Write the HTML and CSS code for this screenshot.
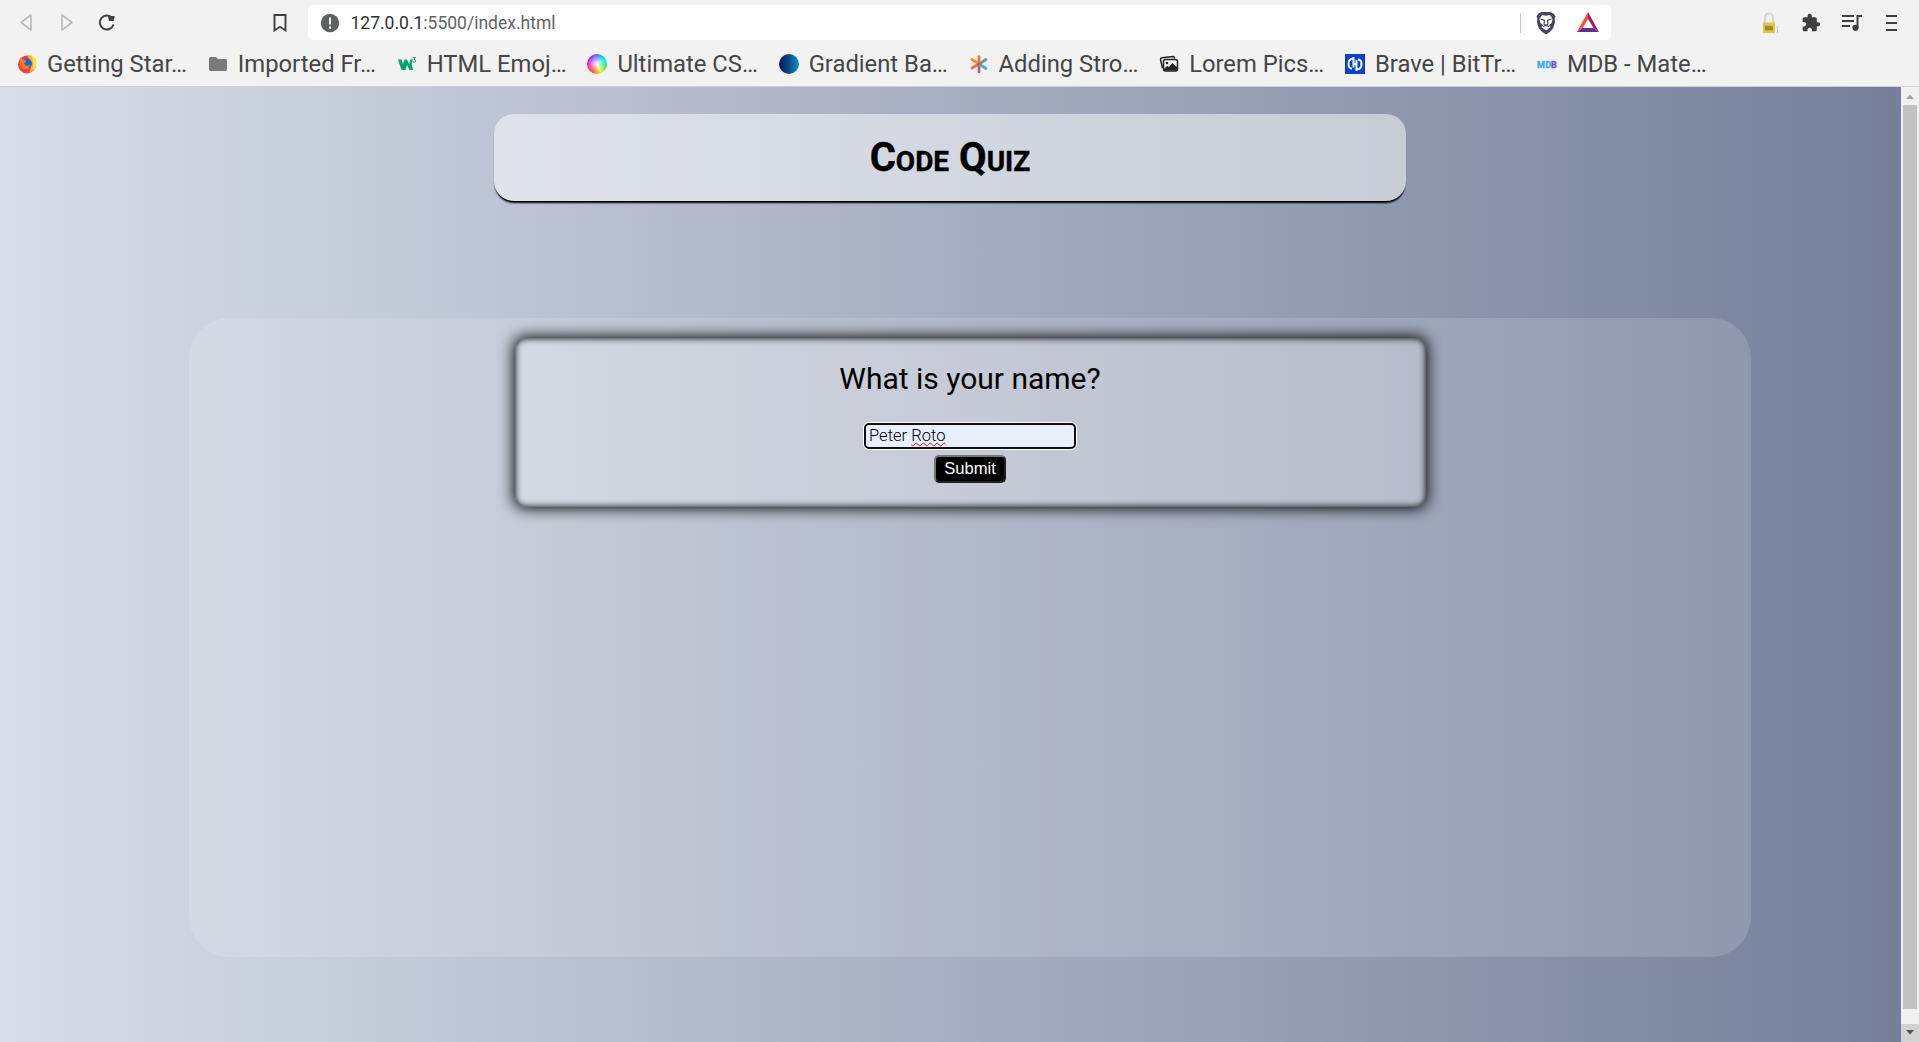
FILE: index.html
```
<!DOCTYPE html>
<html lang="en">
<head>
<meta charset="utf-8">
<title>Code Quiz</title>
<link rel="stylesheet" href="styles.css">
</head>
<body>
<div class="chrome">
  <div class="toolbar">
    <svg class="nav back" width="16" height="22" viewBox="0 0 16 22"><path d="M14 3v15L4 10.500z"/></svg>
    <svg class="nav forward" width="16" height="22" viewBox="0 0 16 22"><path d="M3 3v15L13 10.500z"/></svg>
    <svg class="reload" width="20" height="20" viewBox="0 0 20 20"><path class="line" d="M15.500 5.500A7 7 0 1 0 16.500 11.500"/><path d="M11 3h6.500v1.500l-1 3.500h-4.500z"/></svg>
    <svg class="bookmark" width="14" height="20" viewBox="0 0 14 20"><path d="M1.500 2h11v15.500L7 13.800 1.500 17.500z"/></svg>
    <div class="address">
      <svg class="info" width="20" height="20" viewBox="0 0 20 20"><circle cx="10" cy="10" r="9.200"/><path d="M10 4.500v7M10 13.500v2.200"/></svg>
      <span class="url"><b>127.0.0.1</b>:5500/index.html</span>
      <span class="divider"></span>
      <svg class="lion" width="22" height="24" viewBox="0 0 22 24"><path fill="#43475b" d="M6.500 1h9l3 1.500 2 3-.8 2 .3 4-2 6-3 3.200L11 23.500l-4-2.800-3-3.200-2-6 .3-4-.8-2 2-3z"/><path fill="#fff" d="M7 4l4 .7L15 4l2.500 4-.8 3.800-3 2.700 2 1.500L11 19.500 6.300 16l2-1.500-3-2.700L4.500 8z"/><path fill="none" stroke="#43475b" stroke-width="1.200" d="M5.500 8l4 1.500-.5 3.500 2 1.500 2-1.500-.5-3.500L16.500 8M8 15.500l3-1 3 1"/></svg>
      <svg class="bat" width="24" height="21" viewBox="0 0 24 21"><path fill="#ff4724" d="M12 0v7L6.500 16 1 20z"/><path fill="#9e1f63" d="M12 0v7l5.500 9 5.500 4z"/><path fill="#662d91" d="M1 20l5.500-4h11l5.500 4z"/></svg>
    </div>
    <div class="tools">
      <svg class="lock" width="18" height="22" viewBox="0 0 18 22"><path d="M4 11V6c0-6 8-6 8 0v5" fill="none" stroke="#d5d5d5" stroke-width="2.200"/><path d="M2 10.500h12v10.500H2z" fill="#e3c43a"/><path d="M4 13.500h2l1 1 2-1 2 1 1-.5v4l-2 .5-2-.5-2 .5H4z" fill="#9c8840"/><path d="M16.500 15v6M15.500 15h2" stroke="#c7c7c7"/></svg>
      <svg class="puzzle" width="20" height="20" viewBox="0 0 24 24"><path fill="#3f3f3f" d="M20.500 11H19V7c0-1.100-.9-2-2-2h-4V3.500C13 2.120 11.880 1 10.500 1S8 2.120 8 3.500V5H4c-1.100 0-2 .9-2 2v3.800h1.500c1.500 0 2.700 1.200 2.700 2.700s-1.200 2.700-2.700 2.700H2V20c0 1.100.9 2 2 2h3.800v-1.500c0-1.500 1.200-2.700 2.700-2.700s2.700 1.200 2.700 2.700V22H17c1.100 0 2-.9 2-2v-4h1.500c1.380 0 2.500-1.120 2.500-2.500S21.880 11 20.500 11z"/></svg>
      <svg class="music" width="20" height="18" viewBox="0 0 20 18"><path d="M0 2h12M0 7h12M0 12h8M15.500 14V2H20" fill="none" stroke="#3f3f3f" stroke-width="2"/><circle cx="13.500" cy="13.800" r="3.100" fill="#3f3f3f"/></svg>
      <svg class="menu" width="12" height="18" viewBox="0 0 12 18"><path d="M0 2h11M0 9h11M0 16h11" stroke="#3f3f3f" stroke-width="1.800"/></svg>
    </div>
  </div>
  <div class="bookmarks">
    <div class="item"><svg width="20" height="20" viewBox="0 0 20 20"><circle cx="10" cy="10.500" r="9" fill="#ff3b45"/><path d="M10 1c4 0 8 1 9 6 1 6-2 10-7 12 4-7 1-12-2-18z" fill="#ffb52e"/><path d="M14 1c5 3 6 8 4.500 12-1 2-2.500 3-3 3 2-5 1-10-1.500-15z" fill="#ffe83e"/><circle cx="10" cy="9.500" r="5" fill="#1667dc"/><path d="M3 3l3 3 4 .5-3 3 2 2.500 4-1-2 4-5 0-3-4z" fill="#ff7b24"/></svg><span>Getting Star…</span></div>
    <div class="item"><svg width="20" height="20" viewBox="0 0 20 20"><path d="M1 4.500q0-1.500 1.500-1.500H8l2 2h7.500Q19 5 19 6.500v9q0 1.500-1.500 1.500h-15Q1 17 1 15.500z" fill="#7a7a7a"/></svg><span>Imported Fr…</span></div>
    <div class="item"><svg width="20" height="20" viewBox="0 0 20 20"><path d="M1 5.500h3.500L6 10l1.500-4.500H10L12 10l1.500-4.500H16L14.500 10l1.500 6h-3.500L10 11l-1.500 5h-4z" fill="#04a56c"/><path d="M16 3.500h2.500L17 5.500q2 .3 1.500 2-1 1.200-2.500.5" fill="none" stroke="#04a56c"/></svg><span>HTML Emoj…</span></div>
    <div class="item"><i class="disc wheel"></i><span>Ultimate CS…</span></div>
    <div class="item"><i class="disc blue"></i><span>Gradient Ba…</span></div>
    <div class="item"><svg width="20" height="20" viewBox="0 0 20 20"><g fill="none" stroke-width="2.700" stroke-linecap="round"><path d="M10 10V2.500M10 10L3 14" stroke="#f76b3c"/><path d="M10 10L3 5.500" stroke="#ff8a24"/><path d="M10 10l7-4.500" stroke="#778da6"/><path d="M10 10v8" stroke="#b65c86"/><path d="M10 10l7 4.500" stroke="#38b8ba"/><path d="M9.500 10h1" stroke="#e34e63"/></g></svg><span>Adding Stro…</span></div>
    <div class="item"><svg width="20" height="20" viewBox="0 0 20 20"><path d="M3.500 14L1.500 5.500q0-1.500 1.500-1.800L14 2.500q1.500 0 1.500 2" fill="none" stroke="#222" stroke-width="1.500"/><rect x="4.500" y="5.500" width="14" height="11.500" rx="2" fill="#f2f2f2" stroke="#222" stroke-width="1.500"/><path d="M5 15l3-3 2 1 3.500-4 5 4.500v3H5z" fill="#222"/><circle cx="8" cy="9" r="1.200" fill="#222"/></svg><span>Lorem Pics…</span></div>
    <div class="item"><svg width="20" height="20" viewBox="0 0 20 20"><path d="M0 0h20v20H0z" fill="#0540d0"/><path d="M8.500 3v10.500M8.500 4.500Q3.500 4.500 3.500 10q0 4.500 3.500 4.500M11.500 6v11M11.500 15.500q5 0 5-5.500 0-4.500-3.500-4.500M8.500 10h3" fill="none" stroke="#fff" stroke-width="2"/></svg><span>Brave | BitTr…</span></div>
    <div class="item"><svg width="20" height="20" viewBox="0 0 20 20"><text class="mdb" x="0" y="13.500" textLength="14" fill="#38aee8" stroke="#38aee8">MD</text><text class="mdb" x="14" y="13.500" fill="#6951c5" stroke="#6951c5">B</text></svg><span>MDB - Mate…</span></div>
  </div>
</div>
<div class="viewport">
  <main class="page">
    <header class="title"><h1>C<span>ode</span> Q<span>uiz</span></h1></header>
    <section class="quiz">
      <form class="card">
        <p>What is your name?</p>
        <div class="field">Peter <span>Roto</span></div>
        <button type="button">Submit</button>
      </form>
    </section>
  </main>
  <div class="scrollbar">
    <svg width="18" height="18" viewBox="0 0 18 18"><path d="M5 12l4-4.500 4 4.500z" fill="#a3a3a3"/></svg>
    <div class="thumb"></div>
    <svg class="down" width="18" height="18" viewBox="0 0 18 18"><path d="M5 6h8l-4 4.500z" fill="#505050"/></svg>
  </div>
</div>
</body>
</html>
```
FILE: styles.css
```
* { box-sizing: border-box; }
body { margin: 0; height: 1042px; overflow: hidden; display: flex; flex-direction: column; font-family: Roboto, sans-serif; }
svg { display: block; flex: none; }
.chrome { height: 87px; background: #f2f2f2; border-bottom: 1px solid #cfd0d3; flex: none; }
.toolbar { height: 45px; display: flex; align-items: center; padding-left: 17px; }
.nav { fill: none; stroke: #b9b9b9; stroke-width: 1.600; stroke-linejoin: round; }
.back { margin-right: 26px; }
.forward { margin-right: 22px; }
.reload { fill: #3f3f3f; }
.reload .line { fill: none; stroke: #3f3f3f; stroke-width: 2; }
.bookmark { margin-left: 156px; fill: none; stroke: #3f3f3f; stroke-width: 1.900; }
.address { margin-left: 21px; height: 35px; width: 1303px; background: #fff; border-radius: 5px; display: flex; align-items: center; padding-left: 12px; }
.info { fill: #5f6063; stroke: #fff; stroke-width: 2; }
.info circle { stroke: none; }
.url { margin-left: 10.500px; font-size: 17.500px; color: #5f6368; }
.url b { font-weight: 400; color: #303134; }
.divider { width: 1px; height: 20px; background: #c4c4c4; margin-left: auto; margin-right: 14px; }
.lion { margin-right: 19px; }
.bat { margin-right: 11px; }
.tools { display: flex; align-items: center; margin-left: 150px; }
.puzzle { margin-left: 22px; }
.music { margin-left: 21px; }
.menu { margin-left: 24px; }
.bookmarks { height: 38px; display: flex; align-items: center; padding-left: 17px; gap: 20.800px; }
.item { display: flex; align-items: center; gap: 10px; height: 38px; font-size: 23.800px; color: #454545; white-space: nowrap; }
.disc { width: 20px; height: 20px; border-radius: 50%; }
.wheel { background: radial-gradient(circle, #fff 0, #fff8 30%, #fff0 65%), conic-gradient(#4b6dff, #00e0ff, #20f060, #e8f020, #ff5020, #ff20a0, #b020ff, #4b6dff); }
.blue { background: linear-gradient(90deg, #02165f, #0b4b87 50%, #0d96c5); }
.mdb { font: 700 9px Roboto, sans-serif; stroke-width: .4px; }
.viewport { flex: 1; display: flex; min-height: 0; }
.page { width: 1901px; padding-top: 27px; background: linear-gradient(to right, #d7dde8, #757f9a); }
.title { width: 912px; height: 87px; margin-left: 494px; padding-top: 4px; border-radius: 20px; background: rgba(255,255,255,.5); box-shadow: 0 3px 2px -1px #000, 0 2px 1px -1px #000; display: flex; justify-content: center; align-items: center; }
h1 { margin: 0; font-size: 40px; line-height: 47px; font-weight: 700; -webkit-text-stroke: .4px #000; }
h1 span { font-size: 28px; text-transform: uppercase; }
.quiz { width: 1562px; height: 639px; margin: 117px 0 0 189px; border-radius: 40px; background: rgba(255,255,255,.15); padding-top: 20px; }
.card { width: 911px; height: 169px; margin: 0 auto; border-radius: 10px; background: rgba(255,255,255,.25); box-shadow: 0 0 15px 1px #000, inset 0 0 7px #000; display: flex; flex-direction: column; align-items: center; }
.card p { margin: 23px 0 0; font-size: 30px; line-height: 36px; }
.field { width: 212px; height: 26px; margin-top: 26px; padding: 0 3px; border: 2px solid #101010; border-radius: 5px; box-shadow: 0 0 0 1px #fff; background: #e8f0fe; font-size: 16.600px; line-height: 22px; font-weight: 300; }
.field span { text-decoration: underline wavy #f00 1.300px; text-underline-offset: 1px; text-decoration-skip-ink: none; }
button { margin-top: 6px; width: 72px; height: 28px; padding: 0; border: 2px outset #767676; border-radius: 5px; background: #000; color: #fff; font: 16.600px "Liberation Sans", sans-serif; }
.scrollbar { width: 18px; background: #f1f1f1; display: flex; flex-direction: column; align-items: center; }
.thumb { width: 14px; height: 904px; background: #c1c1c1; }
.down { margin-top: auto; background: #d2d2d2; }
```
